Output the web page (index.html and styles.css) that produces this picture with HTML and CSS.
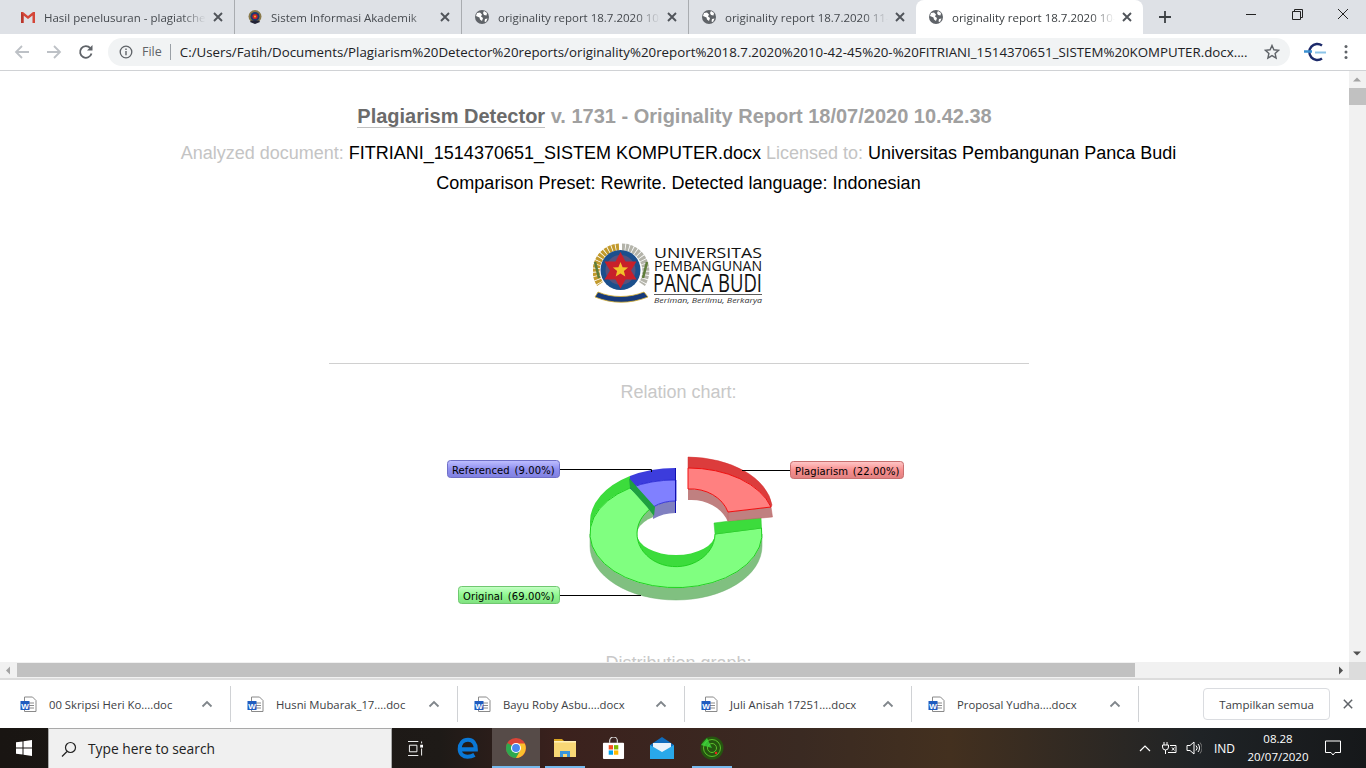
FILE: index.html
```html
<!DOCTYPE html>
<html lang="en">
<head>
<meta charset="UTF-8">
<meta name="viewport" content="width=device-width, initial-scale=1.0">
<title>originality report</title>
<link rel="stylesheet" href="styles.css">
</head>
<body>
<div class="tabstrip">
  <div class="tab">
    <svg class="favicon" viewBox="0 0 16 16"><path d="M1 3h2l5 4 5-4h2v11h-2.500V6.500L8 10 3.500 6.500V14H1z" fill="#d44638"/><path d="M3.500 6.500V14H1V3z" fill="#b9372c"/></svg>
    <span class="tab-title">Hasil penelusuran - plagiatchek</span>
    <svg class="tab-x"><use href="#closex"/></svg>
  </div>
  <div class="tab">
    <svg class="favicon" viewBox="0 0 16 16"><circle cx="8" cy="7.500" r="6.500" fill="#8a7a4a"/><circle cx="8" cy="7.500" r="4.500" fill="#1f3a6e"/><circle cx="8" cy="7.500" r="2.600" fill="#c8202a"/><circle cx="8" cy="7.500" r="1" fill="#f0c020"/><path d="M3 13l5 2 5-2-1-1.500H4z" fill="#223"/></svg>
    <span class="tab-title">Sistem Informasi Akademik</span>
    <svg class="tab-x"><use href="#closex"/></svg>
  </div>
  <div class="tab">
    <svg class="favicon" viewBox="0 0 16 16"><use href="#globe"/></svg>
    <span class="tab-title">originality report 18.7.2020 10-</span>
    <svg class="tab-x"><use href="#closex"/></svg>
  </div>
  <div class="tab">
    <svg class="favicon" viewBox="0 0 16 16"><use href="#globe"/></svg>
    <span class="tab-title">originality report 18.7.2020 11-</span>
    <svg class="tab-x"><use href="#closex"/></svg>
  </div>
  <div class="tab tab-active">
    <svg class="favicon" viewBox="0 0 16 16"><use href="#globe"/></svg>
    <span class="tab-title">originality report 18.7.2020 10-</span>
    <svg class="tab-x"><use href="#closex"/></svg>
  </div>
  <svg class="newtab" viewBox="0 0 12 12"><path d="M6 0v12M0 6h12" stroke="#3c4043" stroke-width="1.800"/></svg>
  <div class="winbtns">
    <svg viewBox="0 0 46 16"><path d="M18 8.500h10" stroke="#222" fill="none"/></svg>
    <svg viewBox="0 0 46 16"><path d="M18.500 5.500h8v8h-8zM20.500 5.500v-2h8v8h-2" stroke="#222" fill="none"/></svg>
    <svg viewBox="0 0 46 16"><path d="M18 3l10 10M28 3L18 13" stroke="#222" fill="none"/></svg>
  </div>
</div>

<svg class="defs" width="0" height="0">
  <symbol id="closex" viewBox="0 0 16 16">
    <path d="M4 4l8 8M12 4l-8 8" stroke="#50545a" stroke-width="1.900"/>
  </symbol>
  <symbol id="globe" viewBox="0 0 16 16">
    <circle cx="8" cy="8" r="7" fill="#5f6368"/>
    <path d="M3 4l3-.5 2 2-1 2 2 1.500-1 3-2-1.500-.5-2L2 7zM10 2l3 2-.5 2.500L10 6l-1-2zM11 10l2.500-.5L12 13l-1.500-.5z" fill="#fff"/>
  </symbol>
  <symbol id="wordicon" viewBox="0 0 17 17">
    <path d="M4.500 1h8l3.500 3.500V15.500H4.500z" fill="#fff" stroke="#8a8a8a"/>
    <path d="M9 7h5M9 9.500h5M9 12h5" stroke="#8a8a8a"/>
    <rect x="0.500" y="5" width="9" height="9" fill="#1f5cc0"/>
    <text x="5" y="12.500" class="word-w">W</text>
  </symbol>
  <symbol id="chev" viewBox="0 0 12 8">
    <path d="M1.500 6.500L6 2l4.500 4.500" fill="none" stroke="#80868b" stroke-width="1.800"/>
  </symbol>
</svg>

<div class="toolbar">
  <svg class="navicon" viewBox="0 0 16 16"><path d="M15 8H2M8 2L2 8l6 6" fill="none" stroke="#bdc1c6" stroke-width="1.800"/></svg>
  <svg class="navicon" viewBox="0 0 16 16"><path d="M1 8h13M8 2l6 6-6 6" fill="none" stroke="#bdc1c6" stroke-width="1.800"/></svg>
  <svg class="navicon" viewBox="0 0 16 16"><path d="M13.500 9.500a5.800 5.800 0 1 1-1.200-5.300" fill="none" stroke="#5f6368" stroke-width="1.800"/><path d="M14.500 1v5.500H9z" fill="#5f6368"/></svg>
  <div class="omnibox">
    <svg class="info" viewBox="0 0 14 14"><circle cx="7" cy="7" r="5.800" fill="none" stroke="#5f6368" stroke-width="1.300"/><path d="M7 6v4.200M7 3.500v1.500" stroke="#5f6368" stroke-width="1.400"/></svg>
    <span class="scheme">File</span>
    <span class="url">C:/Users/Fatih/Documents/Plagiarism%20Detector%20reports/originality%20report%2018.7.2020%2010-42-45%20-%20FITRIANI_1514370651_SISTEM%20KOMPUTER.docx....</span>
    <svg class="star" viewBox="0 0 16 16"><path d="M8 1.500l1.900 4.300 4.600.5-3.400 3.100 1 4.600L8 11.600l-4.100 2.400 1-4.600L1.500 6.300l4.600-.5z" fill="none" stroke="#5f6368" stroke-width="1.400"/></svg>
  </div>
  <svg class="ext" viewBox="0 0 24 20"><path d="M19 3.500a8 8 0 1 0 0 13" fill="none" stroke="#1c2a6a" stroke-width="2.400"/><path d="M1 9.500h8" stroke="#3a8fd0" stroke-width="2.500"/><path d="M12 10.500h11" stroke="#8cc4e8" stroke-width="2"/></svg>
  <svg class="kebab" viewBox="0 0 4 16"><circle cx="2" cy="2.500" r="1.500" fill="#5f6368"/><circle cx="2" cy="8" r="1.500" fill="#5f6368"/><circle cx="2" cy="13.500" r="1.500" fill="#5f6368"/></svg>
</div>

<div class="viewport">
  <div class="page">
    <h1 class="report-title"><a class="brand">Plagiarism Detector</a> v. 1731 - Originality Report 18/07/2020 10.42.38</h1>
    <p class="meta"><span class="dim">Analyzed document:</span> FITRIANI_1514370651_SISTEM KOMPUTER.docx <span class="dim">Licensed to:</span> Universitas Pembangunan Panca Budi</p>
    <p class="meta meta-second">Comparison Preset: Rewrite. Detected language: Indonesian</p>

    <svg class="logo" viewBox="593 243 172 63">
      <!-- wreath: gold wheat left, grey cotton right -->
      <path d="M619 247a24 24 0 0 0-19 37" fill="none" stroke="#c29a2c" stroke-width="7" stroke-dasharray="3 .8"/>
      <path d="M622 247a24 24 0 0 1 20 37" fill="none" stroke="#b4b4aa" stroke-width="7" stroke-dasharray="3 .8"/>
      <path d="M595 262l4 16M647 262l-4 16" stroke="#5e7d3a" stroke-width="2.500"/>
      <circle cx="620.500" cy="270" r="20" fill="#1c4f8c"/>
      <circle cx="620.500" cy="270" r="15" fill="#54527e"/>
      <path d="M620.500 252l5 9.500 11 0-5.500 9 5.500 9h-11l-5 9-5-9h-11l5.500-9-5.500-9h11z" fill="#c8202a"/>
      <path d="M620.500 262l2.100 5.200 5.500.4-4.200 3.500 1.400 5.400-4.800-3-4.800 3 1.400-5.400-4.200-3.500 5.500-.4z" fill="#f2c32a"/>
      <path d="M598 292c14 6 31 6 46 0l4 5c-18 7-36 7-53 0z" fill="#173a7a" stroke="#d8b030" stroke-width="0.800"/>
      <text x="654" y="257.500" class="logo-line" textLength="108" lengthAdjust="spacingAndGlyphs">UNIVERSITAS</text>
      <text x="654" y="270.500" class="logo-line" textLength="108" lengthAdjust="spacingAndGlyphs">PEMBANGUNAN</text>
      <text x="653" y="292" class="logo-big" textLength="109" lengthAdjust="spacingAndGlyphs">PANCA BUDI</text>
      <path d="M654 294.500h108" stroke="#333" stroke-width="0.800"/>
      <text x="654" y="303" class="logo-tag" textLength="108" lengthAdjust="spacingAndGlyphs">Beriman, Berilmu, Berkarya</text>
    </svg>

    <hr class="rule">
    <p class="chart-title">Relation chart:</p>

    <svg class="chart" viewBox="329 440 700 170">
      <defs>
        <linearGradient id="labBlue" x1="0" y1="0" x2="0" y2="1"><stop offset="0" stop-color="#c0c0ff"/><stop offset="0.5" stop-color="#9090f0"/><stop offset="1" stop-color="#8080e0"/></linearGradient>
        <linearGradient id="labGreen" x1="0" y1="0" x2="0" y2="1"><stop offset="0" stop-color="#c8ffc8"/><stop offset="0.5" stop-color="#90f890"/><stop offset="1" stop-color="#80e080"/></linearGradient>
        <linearGradient id="labRed" x1="0" y1="0" x2="0" y2="1"><stop offset="0" stop-color="#ffc8c8"/><stop offset="0.5" stop-color="#f89090"/><stop offset="1" stop-color="#e08080"/></linearGradient>
      </defs>

      <!-- outer wall under the green slice -->
      <path d="M590 534A86 54 0 0 0 762 534L762 546A86 54 0 0 1 590 546Z" fill="#80c080" stroke="#70b070" stroke-width="0.500"/>
      <!-- back band, left part of green -->
      <path d="M630 476A86 54 0 0 0 590 522L590 534A86 54 0 0 1 630 488Z" fill="#3cdc3c"/>
      <!-- inner walls of the hole -->
      <path d="M653 507A39 33 0 0 0 637 534L640 540A39 33 0 0 1 653 519Z" fill="#80c080"/>
      <path d="M637 522A39 33 0 0 1 640 510L653 507L640 534Z" fill="#80c080"/>
      <path d="M637 534A39 21 0 0 0 715 534A39 21 0 0 0 637 534Z" fill="#fff"/>
      <path d="M637 534A39 33 0 0 0 715 534A39 21 0 0 1 637 534Z" fill="#3cdc3c"/>
      <!-- green top -->
      <path d="M761.500 528A86 54 0 1 1 630 488L653 507A39 33 0 1 0 715 534Z" fill="#80ff80" stroke="#20d020"/>
      <path d="M715 534L761.500 528L761 517L714 523Z" fill="#3cdc3c" stroke="#30c830" stroke-width="0.500"/>

      <!-- blue slice -->
      <path d="M653 507A39 33 0 0 1 676 501L676 513A39 33 0 0 0 653 519Z" fill="#8080c0"/>
      <path d="M630 476A86 54 0 0 1 676 468L676 480A86 54 0 0 0 630 488Z" fill="#3c3cdc"/>
      <path d="M630 488A86 54 0 0 1 676 480L676 501A39 33 0 0 0 653 507Z" fill="#8080ff" stroke="#2020d0" stroke-width="0.800"/>
      <path d="M675.500 468V513" stroke="#1010b0"/>
      <path d="M629 478L637 487L655 507L654 516L647 507L630 488Z" fill="#1ea040"/>

      <!-- red slice, pulled out -->
      <path d="M688 489A39 33 0 0 1 728 512L728 522A39 33 0 0 0 688 500Z" fill="#c08080"/>
      <path d="M728 512L771 507L772.500 517L728 521Z" fill="#c08080" stroke="#c06060" stroke-width="0.500"/>
      <path d="M688 457A86 54 0 0 1 772 505L771 507A86 54 0 0 0 688 468Z" fill="#dc3c3c" stroke="#d03030" stroke-width="0.500"/>
      <path d="M688 468A86 54 0 0 1 771 507L728 512A39 33 0 0 0 688 489Z" fill="#ff8080" stroke="#f01010"/>

      <!-- leader lines -->
      <path d="M560 469.500H651.500V472M559 595.500H641M742 470.500H790" fill="none" stroke="#000"/>

      <!-- labels -->
      <rect x="447.500" y="460.500" width="112" height="17" rx="3" fill="url(#labBlue)" stroke="#7070c8"/>
      <text x="452" y="473.500" class="chart-label">Referenced (9.00%)</text>
      <rect x="458.500" y="586.500" width="101" height="17" rx="3" fill="url(#labGreen)" stroke="#70c870"/>
      <text x="463" y="599.500" class="chart-label">Original (69.00%)</text>
      <rect x="790.500" y="461.500" width="113" height="17" rx="3" fill="url(#labRed)" stroke="#c87070"/>
      <text x="795" y="474.500" class="chart-label">Plagiarism (22.00%)</text>
    </svg>

    <p class="chart-title chart-title-next">Distribution graph:</p>
  </div>
  <div class="vscroll">
    <svg class="sb-arrow" viewBox="0 0 16 16"><path d="M4 10l4-4 4 4z" fill="#a3a3a3"/></svg>
    <div class="vthumb"></div>
    <svg class="sb-arrow sb-down" viewBox="0 0 16 16"><path d="M4 6l4 4 4-4z" fill="#505050"/></svg>
  </div>
</div>
<div class="hscroll">
  <svg class="sb-arrow" viewBox="0 0 16 16"><path d="M10 4l-4 4 4 4z" fill="#a3a3a3"/></svg>
  <div class="hthumb"></div>
  <svg class="sb-arrow sb-right" viewBox="0 0 16 16"><path d="M6 4l4 4-4 4z" fill="#505050"/></svg>
  <div class="sb-corner"></div>
</div>

<div class="shelf">
  <div class="dl"><svg class="dl-icon"><use href="#wordicon"/></svg><span class="dl-name">00 Skripsi Heri Ko....doc</span><svg class="dl-chev"><use href="#chev"/></svg></div>
  <div class="dl"><svg class="dl-icon"><use href="#wordicon"/></svg><span class="dl-name">Husni Mubarak_17....doc</span><svg class="dl-chev"><use href="#chev"/></svg></div>
  <div class="dl"><svg class="dl-icon"><use href="#wordicon"/></svg><span class="dl-name">Bayu Roby Asbu....docx</span><svg class="dl-chev"><use href="#chev"/></svg></div>
  <div class="dl"><svg class="dl-icon"><use href="#wordicon"/></svg><span class="dl-name">Juli Anisah 17251....docx</span><svg class="dl-chev"><use href="#chev"/></svg></div>
  <div class="dl"><svg class="dl-icon"><use href="#wordicon"/></svg><span class="dl-name">Proposal Yudha....docx</span><svg class="dl-chev"><use href="#chev"/></svg></div>
  <button class="showall">Tampilkan semua</button>
  <svg class="shelf-x" viewBox="0 0 12 12"><path d="M1 1l10 10M11 1L1 11" stroke="#5f6368" stroke-width="1.800"/></svg>
</div>

<div class="taskbar">
  <div class="start">
    <svg viewBox="0 0 16 16"><path d="M0 2.300L6.500 1.400V7.500H0zM7.500 1.200L16 0V7.500H7.500zM0 8.500H6.500V14.600L0 13.700zM7.500 8.500H16V16L7.500 14.800z" fill="#fff"/></svg>
  </div>
  <div class="searchbox">
    <svg viewBox="0 0 16 16"><circle cx="9.500" cy="6.500" r="5" fill="none" stroke="#222" stroke-width="1.200"/><path d="M6 10.500L1 15.500" stroke="#222" stroke-width="1.300"/></svg>
    <span>Type here to search</span>
  </div>
  <div class="taskitem taskview">
    <svg viewBox="0 0 18 16"><path d="M1 .5h11M1 15.500h11M2.500 4.500h8v7h-8zM15.500 .5v2M15.500 8v7.500" fill="none" stroke="#fff"/><rect x="14" y="4" width="3" height="3" fill="#fff"/></svg>
  </div>
  <div class="taskitem edge">
    <svg viewBox="0 0 24 24"><path d="M3 13.500h17.500C20.500 7 17 3 12 3 6.500 3 3 7 3 13c0 5.500 4 8.500 8.500 8.500 3 0 5.500-.8 7.500-2" fill="none" stroke="#0a78d7" stroke-width="4.500"/></svg>
  </div>
  <div class="taskitem chrome running active">
    <svg viewBox="0 0 24 24"><circle cx="12" cy="12" r="11" fill="#db4437"/><path d="M12 12L2.500 6.500A11 11 0 0 0 12 23l5-8z" fill="#2da94f"/><path d="M12 7h9.500A11 11 0 0 1 12 23l5-9z" fill="#fbc02d"/><circle cx="12" cy="12" r="5.500" fill="#fff"/><circle cx="12" cy="12" r="4.300" fill="#4a88ee"/></svg>
  </div>
  <div class="taskitem files running">
    <svg viewBox="0 0 22 20"><path d="M0 1h8l2 2H0z" fill="#d9a520"/><rect y="3" width="22" height="16" fill="#f8d775"/><rect y="3" width="22" height="1.500" fill="#fff0b8"/><path d="M6 19v-6h10v6h-3v-3H9v3z" fill="#3a96dd"/></svg>
  </div>
  <div class="taskitem store">
    <svg viewBox="0 0 24 24"><path d="M8 6V4a4 4 0 0 1 8 0v2" fill="none" stroke="#ddd" stroke-width="1.200"/><rect x="1" y="6" width="22" height="17" rx="1" fill="#fff"/><rect x="7" y="8.500" width="4.500" height="4.500" fill="#f25022"/><rect x="12.500" y="8.500" width="4.500" height="4.500" fill="#7fba00"/><rect x="7" y="14" width="4.500" height="4.500" fill="#00a4ef"/><rect x="12.500" y="14" width="4.500" height="4.500" fill="#ffb900"/></svg>
  </div>
  <div class="taskitem mail">
    <svg viewBox="0 0 24 22"><path d="M0 8L12 0l12 8v14H0z" fill="#0f6cbd"/><path d="M3 6h18v6l-9 5-9-5z" fill="#e8f2fb"/><path d="M0 8l12 7 12-7v14H0z" fill="#29a8ea"/></svg>
  </div>
  <div class="taskitem radar running">
    <svg viewBox="0 0 24 24"><circle cx="12" cy="12" r="11.500" fill="#25560f"/><circle cx="12" cy="12" r="8.500" fill="none" stroke="#5cc02c"/><circle cx="12" cy="12" r="4.500" fill="none" stroke="#5cc02c"/><path d="M12 12L1 9l6-7z" fill="#3fdf3f" opacity=".75"/><circle cx="16" cy="17" r="1.200" fill="#f02020"/></svg>
  </div>
  <div class="tray">
    <svg class="tray-up" viewBox="0 0 12 8"><path d="M1 7l5-5 5 5" fill="none" stroke="#fff" stroke-width="1.200"/></svg>
    <svg class="tray-power" viewBox="0 0 16 12"><path d="M3 0v3M6 0v3M1.500 3h6v2a3 3 0 0 1-6 0zM4.500 8v4M9 3.500h6v7H7M11 5.500l2.500 3M13.500 5.500L11 8.500" fill="none" stroke="#fff"/></svg>
    <svg class="tray-vol" viewBox="0 0 16 14"><path d="M1 4.500h3l4-3.500v12L4 9.500H1zM10 4.500a3.500 3.500 0 0 1 0 5M12 3a6 6 0 0 1 0 8" fill="none" stroke="#fff"/><path d="M14 1.500a9 9 0 0 1 0 11" fill="none" stroke="#777"/></svg>
    <span class="tray-lang">IND</span>
    <div class="clock"><span>08.28</span><span>20/07/2020</span></div>
    <svg class="tray-note" viewBox="0 0 16 16"><path d="M.5 1h15v11.500H10l-2 2.500-2-2.500H.5z" fill="none" stroke="#fff"/></svg>
  </div>
</div>
</body>
</html>
```
FILE: styles.css
```css
* {
  box-sizing: border-box;
}

html, body {
  height: 100%;
}

body {
  margin: 0;
  width: 1366px;
  height: 768px;
  overflow: hidden;
  display: flex;
  flex-direction: column;
  font-family: "Open Sans", "Noto Sans", sans-serif;
  background-color: #fff;
}

.defs {
  display: block;
  height: 0;
}

/* tab strip */
.tabstrip {
  height: 34px;
  flex: none;
  display: flex;
  padding-left: 8px;
  background-color: #dee1e6;
}

.tab {
  width: 227px;
  height: 34px;
  display: flex;
  align-items: center;
  padding: 0 8px 0 12px;
  border-right: 1px solid #a9acb0;
  background-clip: padding-box;
  color: #45494e;
  font-size: 11.5px;
}

.tab:nth-child(4) {
  border-right: none;
}

.tab-active {
  background-color: #fff;
  border-right: none;
  border-radius: 8px 8px 0 0;
  color: #3c4043;
}

.favicon {
  width: 16px;
  height: 16px;
  flex: none;
  margin-right: 8px;
}

.tab-title {
  flex: 1;
  min-width: 0;
  white-space: nowrap;
  overflow: hidden;
  -webkit-mask-image: linear-gradient(to right, #000 85%, transparent 100%);
  mask-image: linear-gradient(to right, #000 85%, transparent 100%);
}

.tab-x {
  width: 16px;
  height: 16px;
  flex: none;
  margin-left: 4px;
}

.newtab {
  width: 12px;
  height: 12px;
  margin: 11px 0 0 16px;
  flex: none;
}

.winbtns {
  margin-left: auto;
  display: flex;
  padding-top: 6px;
}

.winbtns svg {
  width: 46px;
  height: 16px;
}

/* toolbar */
.toolbar {
  height: 37px;
  flex: none;
  display: flex;
  align-items: center;
  padding: 0 0 1px 14px;
  background-color: #fff;
  border-bottom: 1px solid #d0d2d5;
}

.navicon {
  width: 16px;
  height: 16px;
  margin-right: 16px;
  flex: none;
}

.omnibox {
  width: 1182px;
  height: 28px;
  margin-left: -2px;
  display: flex;
  align-items: center;
  padding: 0 10px 0 11px;
  background-color: #f1f3f4;
  border-radius: 14px;
  font-size: 13.3px;
}

.info {
  width: 14px;
  height: 14px;
  flex: none;
}

.scheme {
  margin-left: 9px;
  padding-right: 8px;
  border-right: 1px solid #9aa0a6;
  color: #5f6368;
  font-size: 12.5px;
  line-height: 16px;
}

.url {
  margin-left: 9px;
  flex: 1;
  white-space: nowrap;
  overflow: hidden;
  color: #202124;
}

.star {
  width: 16px;
  height: 16px;
  flex: none;
}

.ext {
  width: 24px;
  height: 20px;
  margin-left: 13px;
  flex: none;
}

.kebab {
  width: 4px;
  height: 16px;
  margin-left: 17px;
  flex: none;
}

/* report page */
.viewport {
  flex: 1;
  min-height: 0;
  display: flex;
}

.page {
  flex: 1;
  min-width: 0;
  overflow: hidden;
  padding: 32px 0 0 8px;
  text-align: center;
  font-family: "Liberation Sans", Arial, sans-serif;
}

.report-title {
  margin: 0 8px 0 0;
  font-size: 20px;
  line-height: 26px;
  font-weight: 700;
  color: #a0a0a0;
}

.brand {
  color: #6b6b6b;
  border-bottom: 1px solid #c0c0c0;
}

.meta {
  margin: 14px 0 0;
  font-size: 18px;
  line-height: 21px;
  color: #000;
}

.meta-second {
  margin-top: 9px;
}

.dim {
  color: #c4c4c4;
}

.logo {
  display: block;
  width: 172px;
  height: 63px;
  margin: 49px auto 0;
}

.logo-line {
  font-family: "Open Sans", sans-serif;
  font-size: 15px;
  fill: #111;
}

.logo-big {
  font-family: "Open Sans", sans-serif;
  font-size: 25px;
  fill: #111;
}

.logo-tag {
  font-family: "Open Sans", sans-serif;
  font-size: 7.500px;
  font-style: italic;
  fill: #333;
}

.rule {
  width: 700px;
  height: 1px;
  margin: 57px auto 0;
  border: none;
  background-color: #d0d0d0;
}

.chart-title {
  margin: 18px 0 0;
  font-size: 18px;
  line-height: 21px;
  color: #c8c8c8;
}

.chart-title-next {
  margin-top: 43px;
}

.chart {
  display: block;
  width: 700px;
  height: 170px;
  margin: 37px auto 0;
}

.chart-label {
  font-family: "DejaVu Sans", Verdana, sans-serif;
  font-size: 10px;
  letter-spacing: 0.1px;
  word-spacing: 1.500px;
  fill: #000;
}

/* scrollbars */
.vscroll {
  width: 17px;
  flex: none;
  display: flex;
  flex-direction: column;
  background-color: #f1f1f1;
}

.sb-arrow {
  width: 16px;
  height: 17px;
  flex: none;
}

.vthumb {
  height: 17px;
  margin-top: 0;
  background-color: #c1c1c1;
}

.sb-down {
  margin-top: auto;
}

.hscroll {
  height: 18px;
  flex: none;
  display: flex;
  align-items: center;
  background-color: #f1f1f1;
  border-bottom: 2px solid #dcdcdc;
}

.hthumb {
  width: 1118px;
  height: 14px;
  margin-left: 1px;
  background-color: #c1c1c1;
}

.sb-right {
  margin-left: auto;
}

.sb-corner {
  width: 17px;
  height: 16px;
  background-color: #dcdcdc;
}

/* download shelf */
.shelf {
  height: 48px;
  flex: none;
  display: flex;
  align-items: center;
  background-color: #fff;
  font-size: 11.3px;
}

.dl {
  width: 227px;
  height: 36px;
  flex: none;
  display: flex;
  align-items: center;
  padding-left: 16px;
  border-right: 1px solid #d0d2d5;
  color: #3c4043;
}

.dl:first-child {
  width: 231px;
  padding-left: 20px;
}

.dl-icon {
  width: 17px;
  height: 17px;
  flex: none;
}

.word-w {
  font-family: "Liberation Sans", sans-serif;
  font-size: 8px;
  font-weight: 700;
  text-anchor: middle;
  fill: #fff;
}

.dl-name {
  margin-left: 12px;
  width: 152px;
  white-space: nowrap;
}

.dl-chev {
  width: 12px;
  height: 8px;
  flex: none;
}

.showall {
  width: 127px;
  height: 32px;
  margin-left: 64px;
  flex: none;
  padding: 0;
  background-color: #fff;
  border: 1px solid #dadce0;
  border-radius: 4px;
  font-family: inherit;
  font-size: 11.5px;
  color: #3c4043;
}

.shelf-x {
  width: 10px;
  height: 10px;
  margin-left: 13px;
  flex: none;
}

/* taskbar */
.taskbar {
  height: 40px;
  flex: none;
  display: flex;
  align-items: stretch;
  background: linear-gradient(to right, #191512 0, #1e1a17 440px, #3b211d 560px, #3a2a22 800px, #43301f 950px, #1f2326 1200px, #16181a 1366px);
}

.start {
  width: 48px;
  display: flex;
  align-items: center;
  justify-content: center;
}

.start svg {
  width: 16px;
  height: 16px;
}

.searchbox {
  width: 344px;
  display: flex;
  align-items: center;
  padding-left: 12px;
  background-color: #f0f0f0;
  border: 1px solid #a9a9a9;
  border-bottom: none;
  color: #222;
  font-size: 13.8px;
}

.searchbox svg {
  width: 16px;
  height: 16px;
  margin-right: 11px;
  flex: none;
}

.taskitem {
  width: 48px;
  flex: none;
  display: flex;
  align-items: center;
  justify-content: center;
}

.taskview {
  margin-left: -1px;
}

.taskview svg {
  width: 17px;
  height: 15px;
}

.edge {
  margin-left: 5px;
}

.edge svg {
  width: 22px;
  height: 22px;
}

.chrome svg {
  width: 22px;
  height: 22px;
}

.running {
  background: linear-gradient(#76b9ed, #76b9ed) center bottom / 40px 2px no-repeat;
}

.active {
  background: linear-gradient(#76b9ed, #76b9ed) center bottom / 48px 2px no-repeat, #564b48;
}

.files {
  margin-left: 1px;
}

.files svg {
  width: 22px;
  height: 20px;
}

.store svg {
  width: 23px;
  height: 23px;
}

.mail {
  margin-left: 1px;
}

.mail svg {
  width: 24px;
  height: 22px;
}

.radar {
  margin-left: 2px;
}

.radar svg {
  width: 24px;
  height: 24px;
}

.tray {
  margin-left: auto;
  display: flex;
  align-items: center;
  color: #fff;
  font-size: 12px;
}

.tray-up {
  width: 12px;
  height: 8px;
}

.tray-power {
  width: 16px;
  height: 12px;
  margin-left: 10px;
}

.tray-vol {
  width: 16px;
  height: 14px;
  margin-left: 9px;
}

.tray-lang {
  margin-left: 12px;
}

.clock {
  width: 70px;
  margin-left: 8px;
  display: flex;
  flex-direction: column;
  align-items: center;
  line-height: 18px;
  font-size: 11.5px;
}

.tray-note {
  width: 16px;
  height: 16px;
  margin: 0 25px 0 12px;
}
```
